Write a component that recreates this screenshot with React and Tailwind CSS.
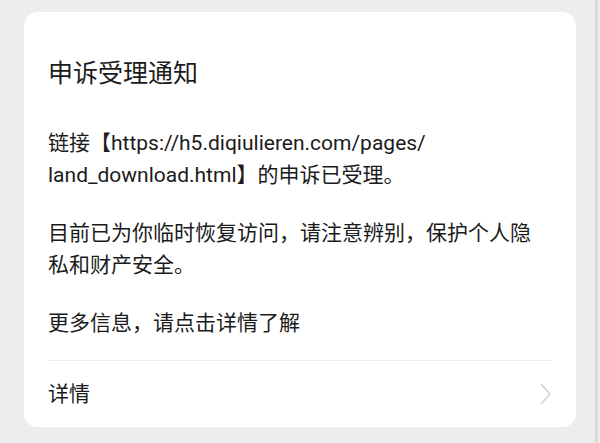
import React from "react";

const ChevronRight = () => (
  <svg width="12" height="22" viewBox="0 0 12 22" fill="none">
    <path d="M1.5 1.5 L10 11 L1.5 20.5" stroke="#cfcfcf" strokeWidth="1.5" strokeLinecap="round" strokeLinejoin="round" />
  </svg>
);

const App = () => {
  return (
    <div
      className="w-[600px] h-[443px] bg-[#ededed] flex overflow-hidden"
      style={{ fontFamily: 'Roboto, "Noto Sans CJK SC", sans-serif' }}
    >
      <div className="flex-1 pt-3 pl-6 pr-[19px]">
        <div className="bg-white rounded-[14px] text-[#1b1b1b]">
          <div className="px-6 pt-[46px]">
            <h1 className="text-[25px] leading-[32px]">申诉受理通知</h1>
            <p className="mt-[37px] text-[21px] leading-[32px]">
              链接【https://h5.diqiulieren.com/pages/
              <br />
              land_download.html】的申诉已受理。
            </p>
            <p className="mt-[26px] text-[21px] leading-[32px] pr-4">
              目前已为你临时恢复访问，请注意辨别，保护个人隐私和财产安全。
            </p>
            <p className="mt-[26px] text-[21px] leading-[32px]">更多信息，请点击详情了解</p>
          </div>
          <div className="mx-6 mt-[21px] border-t border-[#ececec]" />
          <div className="h-[66px] px-6 flex items-center justify-between">
            <span className="text-[21px] leading-[32px]">详情</span>
            <ChevronRight />
          </div>
        </div>
      </div>
      <div className="w-[3px] bg-[#dadada]" />
      <div className="w-[2px]" />
    </div>
  );
};

export default App;
